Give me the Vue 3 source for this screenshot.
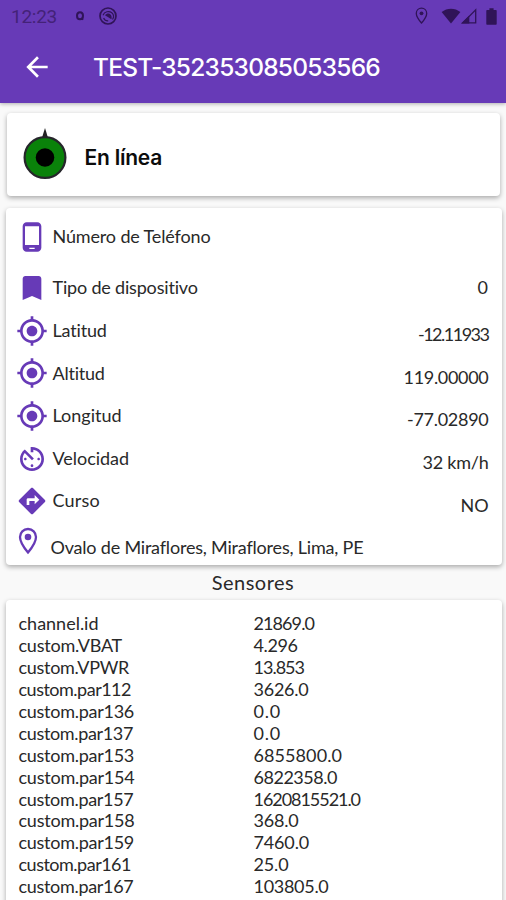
<script setup>
const ctx = document.createElement('canvas').getContext('2d')

// Letter spacing that makes a text of the given font fill the given width.
function track(text, width, font) {
  ctx.font = font
  const gap = (width - ctx.measureText(text).width) / text.length
  return { letterSpacing: gap.toFixed(3) + 'px' }
}

const body = '18px Lato'
const medium = '600 21px Inter'

const icons = {
  phone: 'M16 1H8C6.34 1 5 2.34 5 4v16c0 1.66 1.34 3 3 3h8c1.66 0 3-1.34 3-3V4c0-1.66-1.34-3-3-3zm-2 20h-4v-1h4v1zm3.25-3H6.75V4h10.5v14z',
  bookmark: 'M17 3H7c-1.1 0-1.99.9-1.99 2L5 21l7-3 7 3V5c0-1.1-.9-2-2-2z',
  gps: 'M12 8c-2.21 0-4 1.79-4 4s1.79 4 4 4 4-1.79 4-4-1.79-4-4-4zm8.94 3c-.46-4.17-3.77-7.48-7.94-7.94V1h-2v2.06C6.83 3.52 3.52 6.83 3.06 11H1v2h2.06c.46 4.17 3.77 7.48 7.94 7.94V23h2v-2.06c4.17-.46 7.48-3.77 7.94-7.94H23v-2h-2.06zM12 19c-3.87 0-7-3.13-7-7s3.13-7 7-7 7 3.13 7 7-3.13 7-7 7z',
  timer: 'M11 17c0 .55.45 1 1 1s1-.45 1-1-.45-1-1-1-1 .45-1 1zm0-14v4h2V5.08c3.39.49 6 3.39 6 6.92 0 3.87-3.13 7-7 7s-7-3.13-7-7c0-1.68.59-3.22 1.58-4.42L12 13l1.41-1.41-6.8-6.8v.02C4.42 6.45 3 9.05 3 12c0 4.97 4.02 9 9 9 4.97 0 9-4.03 9-9s-4.03-9-9-9h-1zm7 9c0-.55-.45-1-1-1s-1 .45-1 1 .45 1 1 1 1-.45 1-1zM6 12c0 .55.45 1 1 1s1-.45 1-1-.45-1-1-1-1 .45-1 1z',
  turn: 'M21.71 11.29l-9-9c-.39-.39-1.02-.39-1.41 0l-9 9c-.39.39-.39 1.02 0 1.41l9 9c.39.39 1.02.39 1.41 0l9-9c.39-.38.39-1.01 0-1.41zM14 14.5V12h-4v3H8v-4c0-.55.45-1 1-1h5V7.5l3.5 3.5-3.5 3.5z'
}

const rows = [
  { icon: 'phone', label: 'Número de Teléfono', w: 158.5, value: '', vw: 0, kind: 'tall' },
  { icon: 'bookmark', label: 'Tipo de dispositivo', w: 145.5, value: '0', vw: 11, kind: 'level' },
  { icon: 'gps', label: 'Latitud', w: 54.5, value: '-12.11933', vw: 70.5 },
  { icon: 'gps', label: 'Altitud', w: 52.5, value: '119.00000', vw: 85 },
  { icon: 'gps', label: 'Longitud', w: 69, value: '-77.02890', vw: 81.5 },
  { icon: 'timer', label: 'Velocidad', w: 76.5, value: '32 km/h', vw: 66 },
  { icon: 'turn', label: 'Curso', w: 47.5, value: 'NO', vw: 28 }
]

const sensors = [
  ['channel.id', 80, '21869.0', 60.5],
  ['custom.VBAT', 103.5, '4.296', 44],
  ['custom.VPWR', 110.5, '13.853', 50.5],
  ['custom.par112', 112.5, '3626.0', 55],
  ['custom.par136', 115.5, '0.0', 27.5],
  ['custom.par137', 114.5, '0.0', 27.5],
  ['custom.par153', 115.5, '6855800.0', 88.5],
  ['custom.par154', 116, '6822358.0', 83.5],
  ['custom.par157', 115, '1620815521.0', 106.5],
  ['custom.par158', 116, '368.0', 45],
  ['custom.par159', 115.5, '7460.0', 55.5],
  ['custom.par161', 112.5, '25.0', 35],
  ['custom.par167', 115, '103805.0', 75]
]
</script>

<template>
  <div class="screen">
    <header class="top">
      <div class="status">
        <span class="clock" :style="track('12:23', 46, '19px Roboto')">12:23</span>
        <svg class="dot" width="12" height="14" viewBox="0 0 12 14"><path d="M6 3.200c2 0 3 1.500 3 3.500S8 10.300 6 10.300 3 8.700 3 6.700s1-3.500 3-3.500z" fill="none" stroke="currentColor" stroke-width="2" /><path d="M7.200 9.200l2 1.400" stroke="currentColor" stroke-width="1.600" /></svg>
        <svg class="ring" width="20" height="20" viewBox="0 0 20 20" fill="none" stroke="currentColor">
          <circle cx="10" cy="10" r="8" stroke-width="1.700" />
          <path d="M5 9.200C6.500 5.600 11 4.400 13.800 6.800c2 1.800 2.100 4.600.7 6.700" stroke-width="1.200" />
          <path d="M7 9.200c1.800-2.400 4.800-2.300 6.100 0 .7 1.500.6 2.900.3 4.100z" fill="currentColor" stroke="none" />
          <path d="M5.600 12c.8 1.900 2.600 3 4.600 2.900" stroke-width="1.200" />
        </svg>
        <span class="grow"></span>
        <svg class="pin" width="13" height="18" viewBox="0 0 13 18"><path d="M6.500 1.200c-3 0-5.200 2.300-5.200 5.200 0 3.600 5.200 9.600 5.200 9.600s5.200-6 5.200-9.600c0-2.900-2.200-5.200-5.200-5.200z" fill="none" stroke="currentColor" stroke-width="1.300" /><circle cx="6.500" cy="6.300" r="1.900" fill="currentColor" /></svg>
        <svg class="wifi" width="20" height="16" viewBox="0 0 20 16"><path d="M0.600 4C6-.5 14-.5 19.400 4L10 15.600z" fill="currentColor" /></svg>
        <svg class="cell" width="16" height="16" viewBox="0 0 16 16"><path d="M14.700 1.800v13H1.800z" fill="none" stroke="currentColor" stroke-width="1.300" /><path d="M0 15.500L8.300 7.400v8.100z" fill="currentColor" /></svg>
        <svg class="battery" width="11" height="17" viewBox="0 0 11 17"><path d="M3.400 0.300h4.200V2H10c.4 0 .7.3.7.7v13.400c0 .4-.3.7-.7.7H1c-.4 0-.7-.3-.7-.7V2.700c0-.4.3-.7.7-.7h2.400z" fill="currentColor" /></svg>
      </div>
      <div class="bar">
        <svg class="back" width="32" height="32" viewBox="0 0 24 24"><path d="M20 11H7.830l5.590-5.590L12 4l-8 8 8 8 1.410-1.410L7.830 13H20v-2z" fill="#fff" /></svg>
        <h1 class="title" :style="track('TEST-352353085053566', 287, '550 24.5px Inter')">TEST-352353085053566</h1>
      </div>
    </header>

    <section class="card state">
      <svg class="marker" width="46" height="54" viewBox="0 0 46 54">
        <path d="M19.300 13L23 1l3.700 12z" fill="#222" />
        <circle cx="23" cy="30.500" r="20.400" fill="#0a820a" stroke="#26262b" stroke-width="2.200" />
        <circle cx="23" cy="30.500" r="9.300" fill="#000" />
      </svg>
      <strong class="online" :style="track('En línea', 77.5, medium)">En línea</strong>
    </section>

    <section class="card details">
      <div v-for="row in rows" :key="row.label" class="row" :class="row.kind">
        <svg class="icon" viewBox="0 0 24 24"><path :d="icons[row.icon]" /></svg>
        <span class="label" :style="track(row.label, row.w, body)">{{ row.label }}</span>
        <span v-if="row.value" class="value" :style="track(row.value, row.vw, body)">{{ row.value }}</span>
      </div>
      <div class="row address">
        <svg class="place" width="20" height="28" viewBox="0 0 20 28"><path d="M10 2C5.500 2 2 5.500 2 10c0 6 8 15.500 8 15.500S18 16 18 10c0-4.500-3.500-8-8-8z" fill="none" stroke="#673ab7" stroke-width="2.300" /><circle cx="10" cy="10" r="3.300" fill="#673ab7" /></svg>
        <span class="label" :style="track('Ovalo de Miraflores, Miraflores, Lima, PE', 313, body)">Ovalo de Miraflores, Miraflores, Lima, PE</span>
      </div>
    </section>

    <h2 class="heading" :style="track('Sensores', 82.5, '20px Lato')">Sensores</h2>

    <section class="card sensors">
      <div v-for="s in sensors" :key="s[0]" class="sensor">
        <span :style="track(s[0], s[1], body)">{{ s[0] }}</span>
        <span :style="track(s[2], s[3], body)">{{ s[2] }}</span>
      </div>
    </section>
  </div>
</template>

<style>
body {
  overflow: hidden;
}
</style>

<style scoped>
.screen {
  width: 506px;
  height: 900px;
  overflow: hidden;
  box-sizing: border-box;
  background: #f9f9f9;
  color: #292929;
  font: 18px/22px Lato, sans-serif;
  white-space: nowrap;
  display: flex;
  flex-direction: column;
}
.screen svg {
  display: block;
  flex: none;
}
.top {
  flex: none;
  height: 103px;
  background: #673ab7;
  box-shadow: 0 1px 4px rgba(0, 0, 0, 0.3);
}
.status {
  height: 32px;
  display: flex;
  align-items: center;
  padding: 0 9px 0 11px;
  color: #301458;
}
.clock {
  font: 19px/32px Roboto, sans-serif;
  margin-top: 1px;
  color: #442278;
}
.dot {
  margin-left: 16.500px;
}
.ring {
  margin-left: 12.500px;
}
.grow {
  flex: 1;
}
.pin {
  margin-right: 2px;
}
.wifi {
  margin-left: 11px;
}
.cell {
  margin-left: 0;
}
.battery {
  margin-left: 9px;
}
.bar {
  height: 70px;
  display: flex;
  align-items: center;
  padding-left: 20.500px;
}
.title {
  margin: 0 0 0 40.500px;
  font: 550 24.500px/32px Inter, sans-serif;
  color: #fff;
}
.card {
  flex: none;
  background: #fff;
  border-radius: 4px;
  box-shadow: 0 2px 5px rgba(0, 0, 0, 0.32);
  box-sizing: border-box;
}
.state {
  height: 83px;
  margin: 10px 6px 0 7px;
  padding-left: 15px;
  display: flex;
  align-items: center;
}
.marker {
  margin-bottom: 1px;
}
.online {
  margin: 7px 0 0 16.500px;
  font: 600 21px/28px Inter, sans-serif;
  color: #0c0c0c;
}
.details {
  height: 357px;
  margin: 12px 4px 0 6px;
  padding: 7px 13.500px 0 10px;
}
.row {
  height: 42.600px;
  display: flex;
  align-items: center;
}
.row.tall {
  height: 44px;
  margin-bottom: 7.900px;
}
.icon {
  width: 32px;
  height: 32px;
  fill: #673ab7;
}
.label {
  margin: 0 0 1.500px 4.500px;
}
.value {
  margin: 7px 0 0 auto;
}
.level .value {
  margin: 0 0 1.500px auto;
}
.place {
  margin: 0 0 6px 2px;
}
.address .label {
  margin: 6px 0 0 12.500px;
}
.heading {
  flex: none;
  margin: 0;
  height: 35px;
  font: 20px/34px Lato, sans-serif;
  text-align: center;
}
.sensors {
  height: 320px;
  margin: 0 4px 0 6px;
  padding: 12px 12px 0 12.500px;
}
.sensor {
  height: 21.950px;
  display: grid;
  grid-template-columns: 235px 1fr;
}
</style>
